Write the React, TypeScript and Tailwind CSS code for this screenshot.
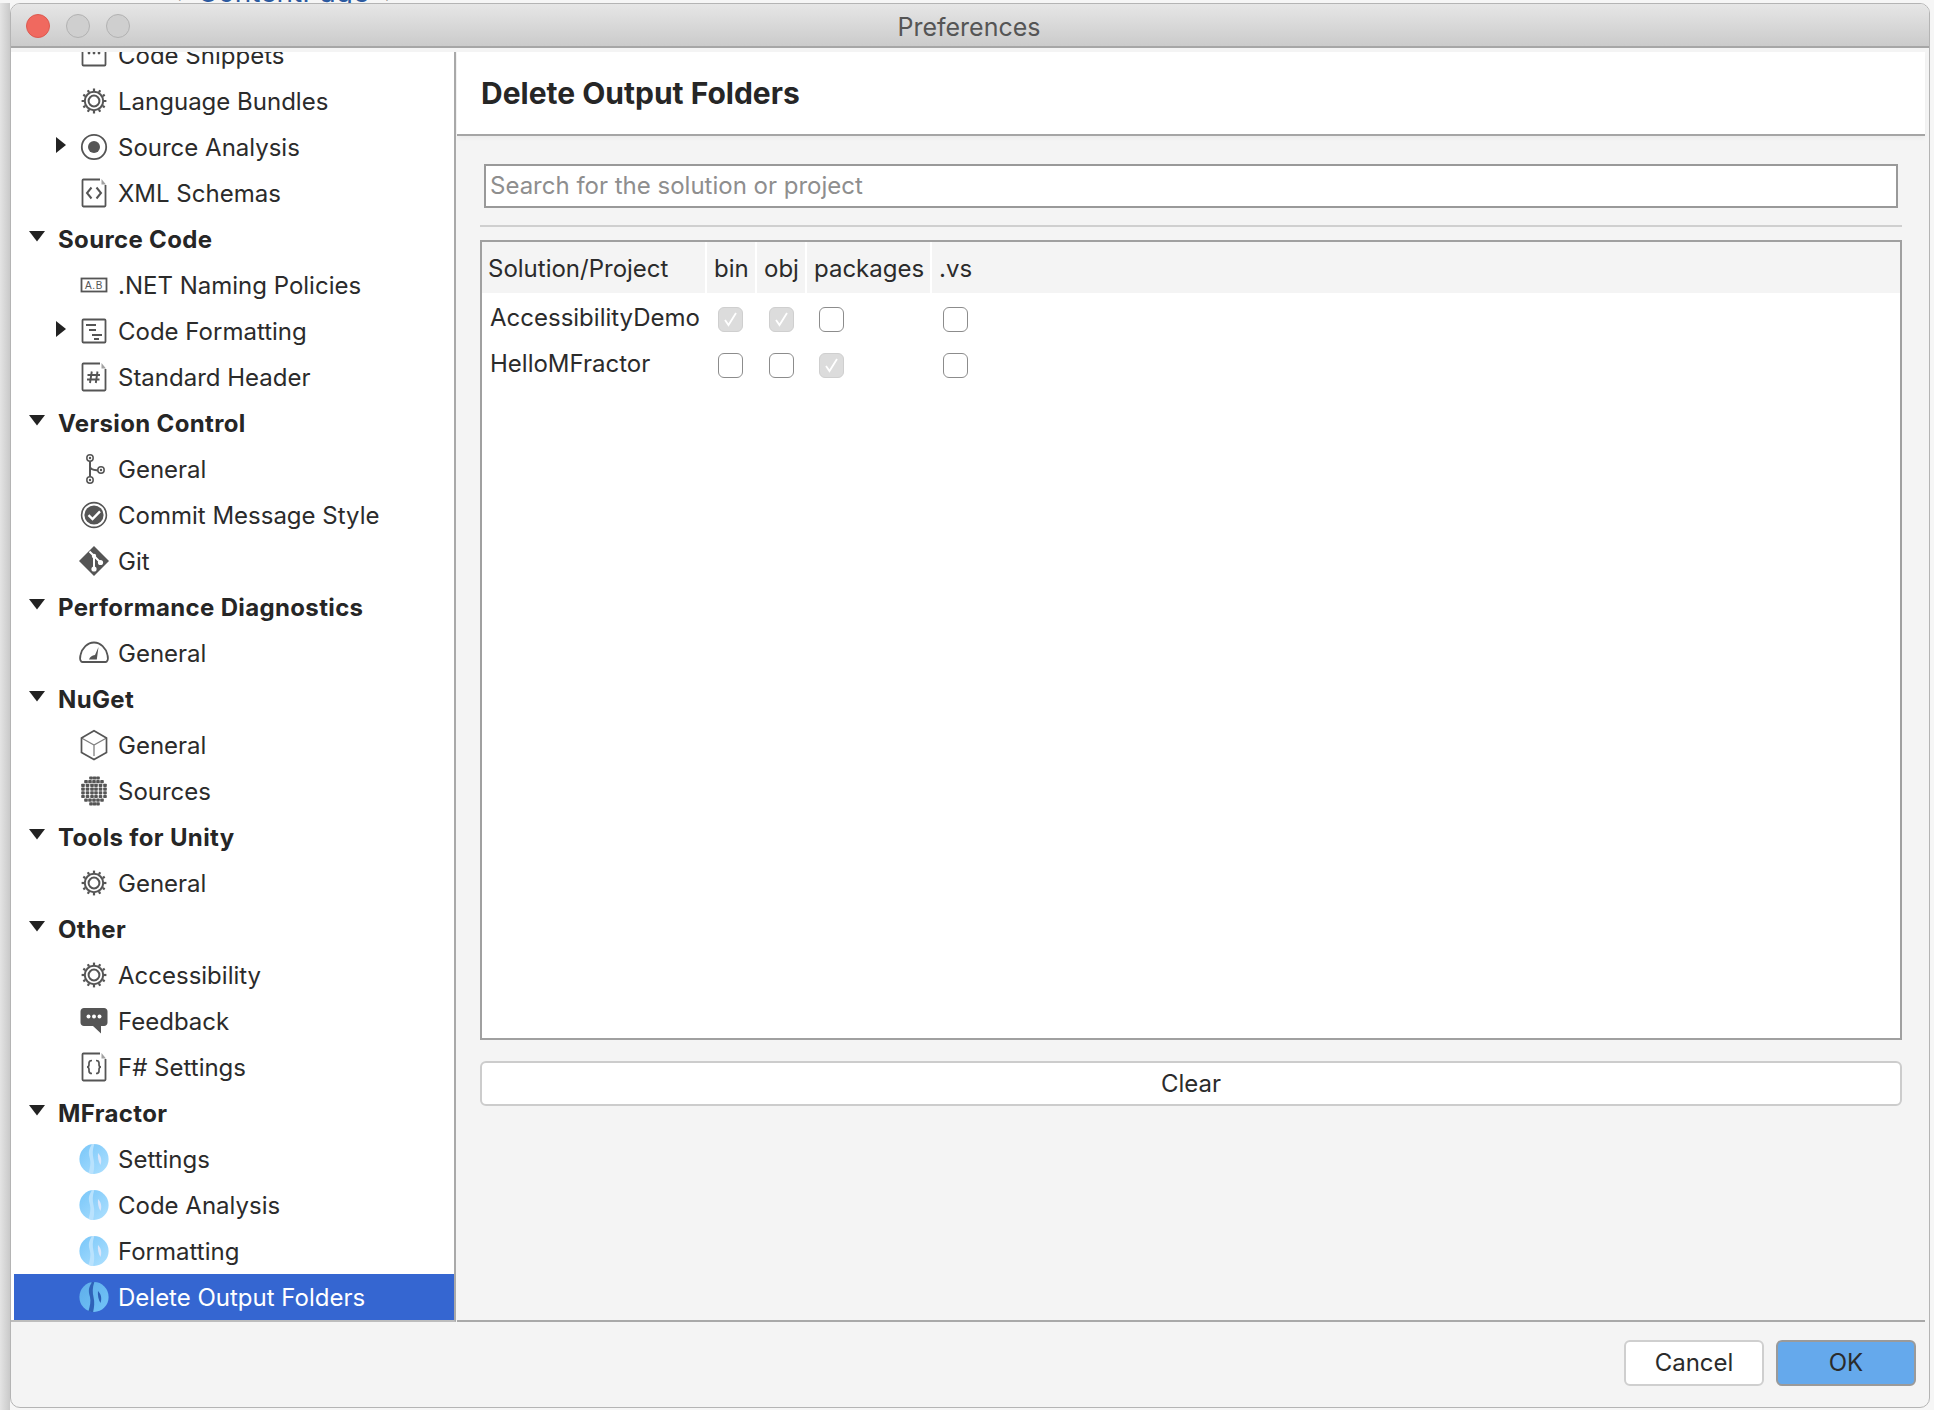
import React from "react";

const ink = "#555555";

function Gear({ c = ink }: { c?: string }) {
  const teeth = Array.from({ length: 12 }, (_, i) => (i * Math.PI) / 6);
  return (
    <svg width="32" height="32" viewBox="0 0 32 32" fill="none" stroke={c}>
      <circle cx="16" cy="16" r="9.2" strokeWidth="2" />
      <circle cx="16" cy="16" r="5.4" strokeWidth="2" />
      {teeth.map((a, i) => (
        <line key={i} x1={16 + 10 * Math.cos(a)} y1={16 + 10 * Math.sin(a)} x2={16 + 12.4 * Math.cos(a)} y2={16 + 12.4 * Math.sin(a)} strokeWidth="2.2" />
      ))}
    </svg>
  );
}

function Doc({ children }: { children?: React.ReactNode }) {
  return (
    <svg width="32" height="32" viewBox="0 0 32 32" fill="none" stroke={ink} strokeWidth="1.8">
      <path d="M22 2.5H5.4c-.5 0-.9.4-.9.9v25.2c0 .5.4.9.9.9h21.2c.5 0 .9-.4.9-.9V8" />
      <path d="M23.5 2v5.5H28z" fill={ink} stroke="none" opacity=".55" />
      {children}
    </svg>
  );
}

function Logo({ selected }: { selected?: boolean }) {
  const id = selected ? "lgS" : "lgN";
  return (
    <svg width="32" height="32" viewBox="0 0 32 32">
      <defs>
        <linearGradient id={id} x1="0" y1="0" x2="1" y2="1">
          <stop offset="0" stopColor={selected ? "#5eaeea" : "#78c6f9"} />
          <stop offset="1" stopColor={selected ? "#72c4f8" : "#aee0fe"} />
        </linearGradient>
      </defs>
      <ellipse cx="16" cy="16" rx="14.6" ry="15" fill={`url(#${id})`} />
      <path d="M13.5 2C9.5 8 11 12 12 16c1 4 0 9-1.500 14 2.200 1 3.600 1 4.600.9 1.200-5 1.600-10 .4-15-1-4-1.200-9 .8-14.800-1-.2-1.800-.2-2.800-.1z" fill={selected ? "#2f62b8" : "#b9e2fd"} />
      <path d="M20 10c3 3 4 7 2.500 12-2-3-3-8-2.500-12z" fill={selected ? "#2d5fb6" : "#dbe6fb"} />
    </svg>
  );
}

function Icon({ name }: { name: string }) {
  switch (name) {
    case "snippet":
      return (
        <svg width="32" height="32" viewBox="0 0 32 32" fill="none" stroke={ink} strokeWidth="1.8">
          <rect x="4.5" y="2.5" width="23" height="24" rx="1" />
          <circle cx="11" cy="14" r="1.4" fill={ink} stroke="none" />
          <circle cx="16" cy="14" r="1.4" fill={ink} stroke="none" />
          <circle cx="21" cy="14" r="1.4" fill={ink} stroke="none" />
        </svg>
      );
    case "gear":
      return <Gear />;
    case "radio":
      return (
        <svg width="32" height="32" viewBox="0 0 32 32" fill="none">
          <circle cx="16" cy="16" r="12.2" stroke={ink} strokeWidth="1.8" />
          <circle cx="16" cy="16" r="6" fill={ink} />
        </svg>
      );
    case "xml":
      return (
        <Doc>
          <path d="M13.5 10.5 9 16l4.500 5.500M18.500 10.500 23 16l-4.500 5.500" strokeWidth="2" />
        </Doc>
      );
    case "naming":
      return (
        <svg width="32" height="32" viewBox="0 0 32 32" fill="none">
          <rect x="3.5" y="9.5" width="25" height="13" stroke={ink} strokeWidth="1.8" />
          <text x="16" y="20" textAnchor="middle" fontFamily="Liberation Sans, sans-serif" fontSize="10" letterSpacing=".6" fill={ink}>A.B</text>
        </svg>
      );
    case "format":
      return (
        <svg width="32" height="32" viewBox="0 0 32 32" fill="none" stroke={ink} strokeWidth="1.8">
          <rect x="4.5" y="4.5" width="23" height="23" rx="1" />
          <path d="M8 10h10M11 15h7M14 20h10M16 24h5" />
        </svg>
      );
    case "header":
      return (
        <Doc>
          <path d="M13.800 10.500 12 22M19.500 10.500 17.800 22M9.500 14h12.500M9 18.500h12.500" strokeWidth="1.900" />
        </Doc>
      );
    case "branch":
      return (
        <svg width="32" height="32" viewBox="0 0 32 32" fill="none" stroke={ink} strokeWidth="1.5">
          <path d="M12 8v16M12 14c1 3 4 3 8 3.500" strokeWidth="2" />
          <circle cx="12" cy="5" r="3.200" fill="#fff" />
          <circle cx="12" cy="5" r="1.200" fill={ink} stroke="none" />
          <circle cx="12" cy="27" r="3.200" fill="#fff" />
          <circle cx="12" cy="27" r="1.200" fill={ink} stroke="none" />
          <circle cx="23" cy="17" r="3.200" fill="#fff" />
          <circle cx="23" cy="17" r="1.200" fill={ink} stroke="none" />
        </svg>
      );
    case "commit":
      return (
        <svg width="32" height="32" viewBox="0 0 32 32" fill="none">
          <circle cx="16" cy="16" r="12.400" stroke={ink} strokeWidth="1.600" />
          <circle cx="16" cy="16" r="9.600" fill={ink} />
          <path d="m10.500 16.200 4 3.800 7.500-7.600" stroke="#fff" strokeWidth="2.400" />
        </svg>
      );
    case "git":
      return (
        <svg width="32" height="32" viewBox="0 0 32 32" fill="none">
          <path d="M16 1 31 16 16 31 1 16z" fill={ink} />
          <path d="M11.500 6.500 16 11v12M16 11l6 6" stroke="#fff" strokeWidth="2" />
          <circle cx="16" cy="24" r="2.600" fill="#fff" />
          <circle cx="22.500" cy="17.500" r="2.600" fill="#fff" />
          <circle cx="16" cy="11" r="2.200" fill="#fff" />
        </svg>
      );
    case "gauge":
      return (
        <svg width="32" height="32" viewBox="0 0 32 32" fill="none" stroke={ink} strokeWidth="1.800">
          <path d="M3.200 24.500C1.800 23 2 20 2.500 18 4 11 9.500 5.500 16 5.500S28 11 29.500 18c.5 2 .7 5-.7 6.500-.3.300-.7.500-1.300.500H4.500c-.600 0-1-.200-1.300-.500z" />
          <path d="M20.500 10 18.800 22.500H11c.8-2.400 3-4 6-4.500z" fill={ink} stroke="none" />
        </svg>
      );
    case "cube":
      return (
        <svg width="32" height="32" viewBox="0 0 32 32" fill="none" stroke={ink} strokeWidth="1.700">
          <path d="M16 1.800 28.500 9v14.500L16 30.500 3.500 23.500V9z" />
          <path d="M3.500 9 16 16l12.500-7M16 16v11" strokeWidth="1.300" opacity=".75" />
        </svg>
      );
    case "sphere": {
      const dots: [number, number][] = [];
      const rows = [
        [13, 16.500, 20],
        [8, 12, 16, 20, 24],
        [5, 9.500, 14, 18, 22.500, 27],
        [5, 9.500, 14, 18, 22.500, 27],
        [5, 9.500, 14, 18, 22.500, 27],
        [5, 9.500, 14, 18, 22.500, 27],
        [8, 12, 16, 20, 24],
        [13, 16.500, 20],
      ];
      rows.forEach((r, i) => r.forEach((x) => dots.push([x, 3 + i * 3.700])));
      return (
        <svg width="32" height="32" viewBox="0 0 32 32">
          {dots.map(([x, y], i) => (
            <rect key={i} x={x - 1.800} y={y - 1.600} width="3.600" height="3.200" rx=".8" fill={ink} />
          ))}
        </svg>
      );
    }
    case "bubble":
      return (
        <svg width="32" height="32" viewBox="0 0 32 32">
          <path d="M6 3h20c2 0 3.500 1.500 3.500 3.500v11c0 2-1.500 3.500-3.500 3.500h-3v7.500L15 21H6c-2 0-3.500-1.500-3.500-3.500v-11C2.500 4.500 4 3 6 3z" fill={ink} />
          <circle cx="10.500" cy="11.500" r="2" fill="#fff" />
          <circle cx="16" cy="11.500" r="2" fill="#fff" />
          <circle cx="21.500" cy="11.500" r="2" fill="#fff" />
        </svg>
      );
    case "fsharp":
      return (
        <Doc>
          <path d="M14 9.500c-2.500 0-3 .800-3 2.500v1.500c0 1.500-.500 2.500-2 2.500 1.500 0 2 1 2 2.500V20c0 1.700.500 2.500 3 2.500M18 9.500c2.500 0 3 .800 3 2.500v1.500c0 1.500.500 2.500 2 2.500-1.500 0-2 1-2 2.500V20c0 1.700-.500 2.500-3 2.500" strokeWidth="1.700" />
        </Doc>
      );
    default:
      return null;
  }
}

type Item = { t: "s" | "i"; label: string; icon?: string; arrow?: boolean; logo?: boolean; selected?: boolean };

const items: Item[] = [
  { t: "i", label: "Code Snippets", icon: "snippet" },
  { t: "i", label: "Language Bundles", icon: "gear" },
  { t: "i", label: "Source Analysis", icon: "radio", arrow: true },
  { t: "i", label: "XML Schemas", icon: "xml" },
  { t: "s", label: "Source Code" },
  { t: "i", label: ".NET Naming Policies", icon: "naming" },
  { t: "i", label: "Code Formatting", icon: "format", arrow: true },
  { t: "i", label: "Standard Header", icon: "header" },
  { t: "s", label: "Version Control" },
  { t: "i", label: "General", icon: "branch" },
  { t: "i", label: "Commit Message Style", icon: "commit" },
  { t: "i", label: "Git", icon: "git" },
  { t: "s", label: "Performance Diagnostics" },
  { t: "i", label: "General", icon: "gauge" },
  { t: "s", label: "NuGet" },
  { t: "i", label: "General", icon: "cube" },
  { t: "i", label: "Sources", icon: "sphere" },
  { t: "s", label: "Tools for Unity" },
  { t: "i", label: "General", icon: "gear" },
  { t: "s", label: "Other" },
  { t: "i", label: "Accessibility", icon: "gear" },
  { t: "i", label: "Feedback", icon: "bubble" },
  { t: "i", label: "F# Settings", icon: "fsharp" },
  { t: "s", label: "MFractor" },
  { t: "i", label: "Settings", logo: true },
  { t: "i", label: "Code Analysis", logo: true },
  { t: "i", label: "Formatting", logo: true },
  { t: "i", label: "Delete Output Folders", logo: true, selected: true },
];

function Row({ it }: { it: Item }) {
  if (it.t === "s") {
    return (
      <div className="h-[46px] flex items-center pl-[15px] text-[24px] font-bold text-[#262626] tracking-[0.35px]">
        <svg width="16" height="11" viewBox="0 0 16 11" className="-mt-[6px] mr-[13px]">
          <path d="M0 0h16L8 10.500z" fill="#222" />
        </svg>
        <span className="pt-[2px]">{it.label}</span>
      </div>
    );
  }
  return (
    <div className={`h-[46px] flex items-center pl-[42px] text-[24px] ${it.selected ? "bg-[#3566d1] text-white" : "text-[#2b2b2b]"}`}>
      <div className="w-[10px] h-[16px] -mt-[4px]">
        {it.arrow && (
          <svg width="10" height="16" viewBox="0 0 10 16">
            <path d="M0 0v16l10-8z" fill="#222" />
          </svg>
        )}
      </div>
      <div className="ml-[12px] w-[32px] h-[32px]">
        {it.logo ? <Logo selected={it.selected} /> : <Icon name={it.icon!} />}
      </div>
      <span className="ml-[8px] pt-[2px]">{it.label}</span>
    </div>
  );
}

function Box({ checked }: { checked?: boolean }) {
  if (checked) {
    return (
      <div className="w-[25px] h-[25px] rounded-[6px] bg-[#dcdcdc] border border-[#cfcfcf] flex items-center justify-center">
        <svg width="19" height="19" viewBox="0 0 19 19" fill="none">
          <path d="m4 10 3.500 5L15 3" stroke="#fff" strokeWidth="1.800" />
        </svg>
      </div>
    );
  }
  return <div className="w-[25px] h-[25px] rounded-[6px] bg-white border border-[#8c8c8c]" />;
}

const gridCols = "grid grid-cols-[225px_50px_50px_125px_1fr]";

function TableRow({ name, checks }: { name: string; checks: boolean[] }) {
  return (
    <div className={`${gridCols} h-[46px] items-center`}>
      <div className="pl-[8px] -mt-[2px]">{name}</div>
      {checks.map((c, i) => (
        <div key={i} className={i === 0 || i === 3 ? "pl-[11px]" : "pl-[12px]"}>
          <Box checked={c} />
        </div>
      ))}
    </div>
  );
}

export default function App() {
  return (
    <div className="w-[1934px] h-[1410px] overflow-hidden flex flex-col bg-[#f6f6f6] font-['Inter','Liberation_Sans',sans-serif] text-[#2b2b2b] text-[24px]">
      <div className="h-[3px] overflow-hidden pl-[165px] flex items-end shrink-0">
        <div className="text-[28px] leading-[22px] whitespace-nowrap text-[#222] shrink-0">
          {"<"}<span className="text-[#2c5aa0] mx-[14px]">ContentPage</span>{">"}
        </div>
      </div>
      <div className="flex-1 flex bg-[linear-gradient(to_right,#e4e4e4_0,#c9c9c9_10px,#f6f6f6_10px)] pb-[2px]">
        <div className="ml-[10px] w-[1920px] h-[1405px] flex flex-col rounded-[10px] border border-[#b4b4b4] bg-[#f4f4f4] overflow-hidden">
          <div className="relative h-[44px] shrink-0 flex items-center justify-center bg-[linear-gradient(to_bottom,#e6e6e6,#cbcbcb)] border-b-2 border-[#a6a6a6]">
            <div className="absolute left-[15px] top-[10px] flex gap-[16px]">
              <div className="w-[24px] h-[24px] rounded-full bg-[#f0695f] border border-[#dc5a50]" />
              <div className="w-[24px] h-[24px] rounded-full bg-[#cfcfcf] border border-[#b2b2b2]" />
              <div className="w-[24px] h-[24px] rounded-full bg-[#cfcfcf] border border-[#b2b2b2]" />
            </div>
            <span className="text-[25px] text-[#555555] -ml-[2px] pt-[6px]">Preferences</span>
          </div>
          <div className="flex-1 flex flex-col min-h-0 pt-[4px]">
            <div className="h-[1270px] flex shrink-0">
              <div className="w-[445px] shrink-0 bg-white pl-[3px] border-r-2 border-[#a9a9a9] border-b-2 border-b-[#bdbdbd] overflow-hidden">
                <div className="-mt-[20px]">
                  {items.map((it, i) => (
                    <Row key={i} it={it} />
                  ))}
                </div>
              </div>
              <div className="flex-1 flex flex-col ml-[1px] mr-[4px] border-b-2 border-[#a9a9a9]">
                <div className="h-[84px] shrink-0 bg-white border-b-2 border-[#a5a5a5] flex items-center pl-[24px] shadow-[0_3px_4px_rgba(0,0,0,0.03)]">
                  <span className="text-[30px] font-bold text-[#262626]">Delete Output Folders</span>
                </div>
                <div className="flex-1 flex flex-col px-[23px] pt-[28px]">
                  <div className="mx-[4px] h-[44px] shrink-0 border-2 border-[#999999] bg-white flex items-center pl-[4px] text-[#8e8e8e]">
                    Search for the solution or project
                  </div>
                  <div className="mt-[17px] h-[2px] shrink-0 bg-[#cfcfcf]" />
                  <div className="mt-[13px] h-[800px] shrink-0 border-2 border-[#a0a0a0] bg-white flex flex-col">
                    <div className={`${gridCols} h-[51px] shrink-0 bg-[#f4f4f4] items-center`}>
                      <div className="h-full flex items-center pl-[6px] pt-[3px] border-r-2 border-white">Solution/Project</div>
                      <div className="h-full flex items-center pl-[7px] pt-[3px] border-r-2 border-white">bin</div>
                      <div className="h-full flex items-center pl-[7px] pt-[3px] border-r-2 border-white">obj</div>
                      <div className="h-full flex items-center pl-[7px] pt-[3px] border-r-2 border-white">packages</div>
                      <div className="h-full flex items-center pl-[7px] pt-[3px]">.vs</div>
                    </div>
                    <div className="pt-[3px]">
                      <TableRow name="AccessibilityDemo" checks={[true, true, false, false]} />
                      <TableRow name="HelloMFractor" checks={[false, false, true, false]} />
                    </div>
                  </div>
                  <div className="mt-[21px] h-[45px] shrink-0 rounded-[6px] border-2 border-[#cccccc] bg-white flex items-center justify-center">
                    Clear
                  </div>
                </div>
              </div>
            </div>
            <div className="flex-1 flex justify-end items-start pt-[18px] pr-[13px] gap-[12px]">
              <div className="w-[140px] h-[46px] rounded-[6px] border-2 border-[#cfcfcf] bg-white flex items-center justify-center">Cancel</div>
              <div className="w-[140px] h-[46px] rounded-[6px] border-2 border-[#9a9a9a] bg-[#65a9ec] flex items-center justify-center">OK</div>
            </div>
          </div>
        </div>
      </div>
    </div>
  );
}
